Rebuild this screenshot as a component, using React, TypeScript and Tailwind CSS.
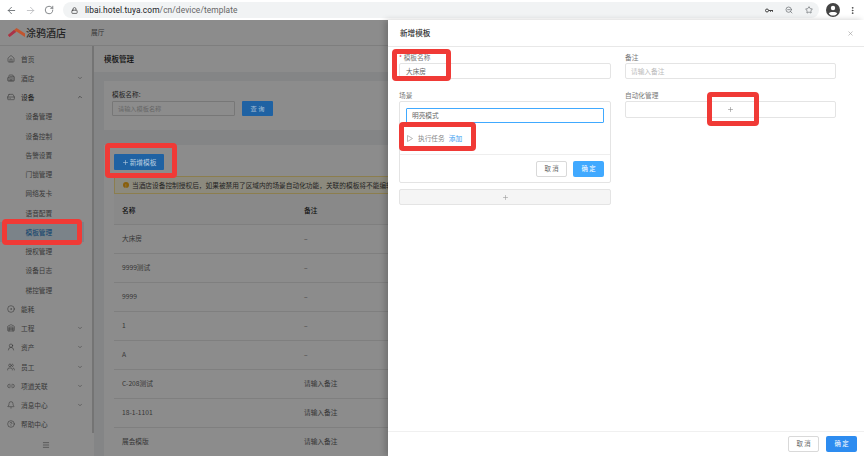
import {
  ArrowLeft,
  ArrowRight,
  RotateCw,
  Lock,
  ZoomOut,
  Star,
  MoreVertical,
  Home,
  Building2,
  HardDrive,
  CircleDot,
  Warehouse,
  UserRound,
  Users,
  Link2,
  Bell,
  CircleHelp,
  ChevronDown,
  ChevronUp,
  Menu,
  Plus,
  X,
} from "lucide-react";

const font = "font-['Noto_Sans_CJK_SC','Noto_Sans',sans-serif]";

const menu = [
  { label: "首页", icon: Home },
  { label: "酒店", icon: Building2, arrow: "down" },
  { label: "设备", icon: HardDrive, arrow: "up", strong: true },
  { label: "设备管理" },
  { label: "设备控制" },
  { label: "告警设置" },
  { label: "门锁管理" },
  { label: "网络发卡" },
  { label: "语音配置" },
  { label: "模板管理", active: true },
  { label: "授权管理" },
  { label: "设备日志" },
  { label: "梯控管理" },
  { label: "能耗", icon: CircleDot },
  { label: "工程", icon: Warehouse, arrow: "down" },
  { label: "资产", icon: UserRound, arrow: "down" },
  { label: "员工", icon: Users, arrow: "down" },
  { label: "项道关联", icon: Link2, arrow: "down" },
  { label: "消息中心", icon: Bell, arrow: "down" },
  { label: "帮助中心", icon: CircleHelp },
];

const rows = [
  { name: "大床房", note: "–" },
  { name: "9999测试", note: "–" },
  { name: "9999", note: "–" },
  { name: "1", note: "–" },
  { name: "A", note: "–" },
  { name: "C-208测试", note: "请输入备注" },
  { name: "18-1-1101", note: "请输入备注" },
  { name: "展会模版", note: "请输入备注" },
];

function BrowserBar() {
  return (
    <div className="flex h-[20px] shrink-0 items-center bg-white text-[#5f6368]">
      <div className="flex w-[63px] shrink-0 items-center pl-[6px]">
        <ArrowLeft size={11} strokeWidth={1.8} />
        <ArrowRight size={11} strokeWidth={1.8} className="ml-[8px] text-[#b8babd]" />
        <RotateCw size={10} strokeWidth={1.8} className="ml-[8px]" />
      </div>
      <div className="flex h-[16px] flex-1 items-center rounded-full bg-[#f1f3f4] pl-[8px] pr-[6px]">
        <Lock size={7} strokeWidth={2.5} className="text-[#444]" />
        <span className="ml-[7px] font-['Roboto',sans-serif] text-[8.4px] tracking-[0.01em] text-[#202124]">
          libai.hotel.tuya.com<span className="text-[#666]">/cn/device/template</span>
        </span>
        <svg width="8" height="5" viewBox="0 0 8 5" className="ml-auto text-[#444]">
          <circle cx="2" cy="2.5" r="1.5" fill="none" stroke="currentColor" />
          <path d="M3.5 2H8V3.8H7V3H6V3.8H5V3H3.5Z" fill="currentColor" />
        </svg>
        <ZoomOut size={8} className="ml-[12px]" />
        <Star size={8} className="ml-[12px]" />
      </div>
      <svg width="14" height="14" viewBox="0 0 14 14" className="ml-[7px]">
        <circle cx="7" cy="7" r="7" fill="#444" />
        <circle cx="7" cy="5" r="2.2" fill="#fff" />
        <path d="M2.8 10.4 C4 8.6 10 8.6 11.2 10.4 C10 12 8.5 12.6 7 12.6 C5.5 12.6 4 12 2.8 10.4Z" fill="#fff" />
      </svg>
      <MoreVertical size={9} strokeWidth={2.4} className="ml-[7.5px] mr-[7.5px] text-[#444]" />
    </div>
  );
}

function Sidebar() {
  return (
    <aside className="flex w-[94px] shrink-0 bg-white">
      <div className="flex w-[92px] flex-col pt-[3px]">
        {menu.map((m) => {
          const Icon = m.icon;
          return (
            <div
              key={m.label}
              className={`flex h-[19.25px] shrink-0 items-center text-[6.7px] ${
                m.active ? "mr-[8px] bg-[#e1effa] text-[#1677c5]" : m.strong ? "text-[#333]" : "text-[#6a6a6a]"
              }`}
            >
              {Icon ? (
                <Icon size={8} strokeWidth={1.4} className="ml-[7px] mr-[6px] text-[#444]" />
              ) : (
                <span className="w-[25.5px]" />
              )}
              <span>{m.label}</span>
              {m.arrow === "down" && <ChevronDown size={6} className="ml-auto mr-[9px]" />}
              {m.arrow === "up" && <ChevronUp size={6} className="ml-auto mr-[9px]" />}
            </div>
          );
        })}
        <div className="flex flex-1 items-center justify-center text-[#444]">
          <Menu size={8} strokeWidth={1.5} />
        </div>
      </div>
      <div className="mb-[23px] w-[2px] bg-[#d4d4d4]" />
    </aside>
  );
}

function PageBehind() {
  return (
    <main className="min-w-0 flex-1 overflow-hidden bg-[#f0f2f5]">
      <div className="flex h-[26px] items-center bg-white pl-[10px] text-[7.5px] font-medium text-[#222]">
        模板管理
      </div>
      <div className="mb-[15px] ml-[10px] mt-[9px] h-[49px] bg-white pl-[8px] pt-[8px]">
        <div className="text-[6.7px] leading-[10px] text-[#444]">模板名称:</div>
        <div className="mt-[2px] flex gap-[7px]">
          <div className="flex h-[15px] w-[123px] items-center rounded-[1px] border border-[#d9d9d9] pl-[5px] text-[6.2px] text-[#bbb]">
            请输入模板名称
          </div>
          <div className="relative z-[11] flex h-[15px] w-[31px] items-center justify-center rounded-[1px] bg-[#1f62a3] text-[6.2px] text-[#a9c0d6]">
            查 询
          </div>
        </div>
      </div>
      <div className="ml-[10px] h-[400px] bg-white pl-[10px] pt-[9px]">
        <div className="relative z-[11] flex h-[16px] w-[50px] items-center justify-center rounded-[1px] bg-[#1f62a3] text-[6.7px] text-[#b8cde0]">
          <Plus size={7} className="mr-[1px]" />
          新增模板
        </div>
        <div className="mt-[6px] flex h-[18px] w-[400px] items-center whitespace-nowrap border border-[#ffe58f] bg-[#fffbe6] pl-[8px] text-[6.7px] text-[#444]">
          <span className="mr-[3px] flex h-[6px] w-[6px] items-center justify-center rounded-full bg-[#faad14] text-[5px] leading-none text-white">
            !
          </span>
          当酒店设备控制授权后，如果被禁用了区域内的场景自动化功能，关联的模板将不能编辑
        </div>
        <div className="flex h-[30px] items-center bg-[#fafafa] pt-[2px] text-[6.7px] font-medium text-[#222]">
          <span className="w-[190px] pl-[8px]">名称</span>
          <span>备注</span>
        </div>
        {rows.map((r) => (
          <div
            key={r.name}
            className="flex h-[29px] items-center border-t border-[#e8e8e8] pb-[1.5px] text-[6.7px] text-[#666]"
          >
            <span className="w-[190px] pl-[8px]">{r.name}</span>
            <span>{r.note}</span>
          </div>
        ))}
      </div>
    </main>
  );
}

function Label({ children }: { children: React.ReactNode }) {
  return <div className="text-[6.7px] leading-[10px] text-[#777]">{children}</div>;
}

function Drawer() {
  return (
    <div className="absolute bottom-0 right-0 top-0 z-20 flex w-[476px] flex-col bg-white shadow-[-3px_0_6px_rgba(0,0,0,0.2)]">
      <div className="flex h-[27px] shrink-0 items-center justify-between border-b border-[#e8e8e8] pl-[12px] pr-[10px]">
        <span className="text-[7.6px] font-medium text-[#333]">新增模板</span>
        <X size={7} className="text-[#999]" />
      </div>
      <div className="flex flex-1 gap-[14px] pl-[11px] pr-[28px] pt-[5px]">
        <div className="w-[212px]">
          <Label>
            <span className="text-[#f5222d]">* </span>模板名称
          </Label>
          <div className="mt-[1px] flex h-[16px] items-center rounded-[2px] border border-[#e4e4e4] pl-[6px] text-[6.7px] text-[#666]">
            大床房
          </div>
          <div className="mt-[11px]">
            <Label>场景</Label>
          </div>
          <div className="mt-[1px] h-[82px] rounded-[2px] border border-[#e4e4e4]">
            <div className="px-[6px] pt-[6px]">
              <div className="flex h-[15px] items-center rounded-[1px] border border-[#40a9ff] pl-[5px] text-[6.7px] text-[#666]">
                明亮模式
              </div>
            </div>
            <div className="flex h-[31px] items-center pl-[7px] text-[6.7px] text-[#888]">
              <svg width="6" height="7" viewBox="0 0 6 7" className="mr-[5px]">
                <path d="M0.5 0.5 L5.5 3.5 L0.5 6.5 Z" fill="none" stroke="#aaa" strokeWidth="0.8" />
              </svg>
              执行任务
              <span className="ml-[4px] text-[#3ba0f0]">添加</span>
            </div>
            <div className="flex h-[28px] items-center justify-end gap-[6px] border-t border-[#eee] pr-[6px]">
              <div className="flex h-[16px] w-[31px] items-center justify-center rounded-[2px] border border-[#d9d9d9] text-[6.4px] text-[#666]">
                取 消
              </div>
              <div className="flex h-[16px] w-[31px] items-center justify-center rounded-[2px] bg-[#40a9ff] text-[6.4px] text-white">
                确 定
              </div>
            </div>
          </div>
          <div className="mt-[6px] flex h-[16px] items-center justify-center rounded-[2px] border border-[#e4e4e4] bg-[#f5f5f5] text-[#999]">
            <Plus size={7} />
          </div>
        </div>
        <div className="w-[211px]">
          <Label>备注</Label>
          <div className="mt-[1px] flex h-[16px] items-center rounded-[2px] border border-[#e4e4e4] pl-[5px] text-[6.7px] text-[#bbb]">
            请输入备注
          </div>
          <div className="mt-[11px]">
            <Label>自动化管理</Label>
          </div>
          <div className="mt-[1px] flex h-[17px] items-center justify-center rounded-[2px] border border-[#e4e4e4] text-[#888]">
            <Plus size={7} />
          </div>
        </div>
      </div>
      <div className="flex h-[25px] shrink-0 items-center justify-end gap-[7px] border-t border-[#f0f0f0] pr-[7px]">
        <div className="flex h-[16px] w-[31px] items-center justify-center rounded-[2px] border border-[#d9d9d9] text-[6.4px] text-[#666]">
          取 消
        </div>
        <div className="flex h-[16px] w-[31px] items-center justify-center rounded-[2px] bg-[#2d8cf0] text-[6.4px] text-white">
          确 定
        </div>
      </div>
    </div>
  );
}

export default function App() {
  return (
    <div className={`relative flex h-[456px] w-[864px] flex-col overflow-hidden bg-white ${font}`}>
      <BrowserBar />
      <div className="relative flex min-h-0 flex-1 flex-col">
        {/* page behind the drawer */}
        <header className="flex h-[26px] shrink-0 items-center border-b border-[#e6e6e6] bg-white pl-[8px]">
          <svg width="17" height="9" viewBox="0 0 17 9" className="relative z-[11]">
            <path d="M0 7 L8.5 0 L17 5.5 L17 9 L8.5 3.5 L1.5 9 Z" fill="#c2552f" />
            <path d="M0 7 L6 2 L8 4 L1.5 9 Z" fill="#a8324a" />
          </svg>
          <span className="ml-[1px] text-[10px] font-medium text-[#444]">涂鸦酒店</span>
          <span className="ml-[25px] text-[6.7px] text-[#666]">展厅</span>
        </header>
        <div className="flex min-h-0 flex-1">
          <Sidebar />
          <PageBehind />
        </div>
        <div className="absolute inset-0 z-10 bg-black/45" />
        <Drawer />
      </div>
      {/* red annotation boxes drawn on the screenshot */}
      <div className="absolute left-[105px] top-[143px] z-30 h-[35px] w-[72px] rounded-[4px] border-[5px] border-[#f03a36]" />
      <div className="absolute left-[2px] top-[219px] z-30 h-[26px] w-[80px] rounded-[4px] border-[5px] border-[#f03a36]" />
      <div className="absolute left-[392px] top-[49px] z-30 h-[32px] w-[59px] rounded-[4px] border-[5px] border-[#f03a36]" />
      <div className="absolute left-[399px] top-[122px] z-30 h-[29px] w-[77px] rounded-[4px] border-[5px] border-[#f03a36]" />
      <div className="absolute left-[707px] top-[92px] z-30 h-[34px] w-[52px] rounded-[4px] border-[5px] border-[#f03a36]" />
    </div>
  );
}
